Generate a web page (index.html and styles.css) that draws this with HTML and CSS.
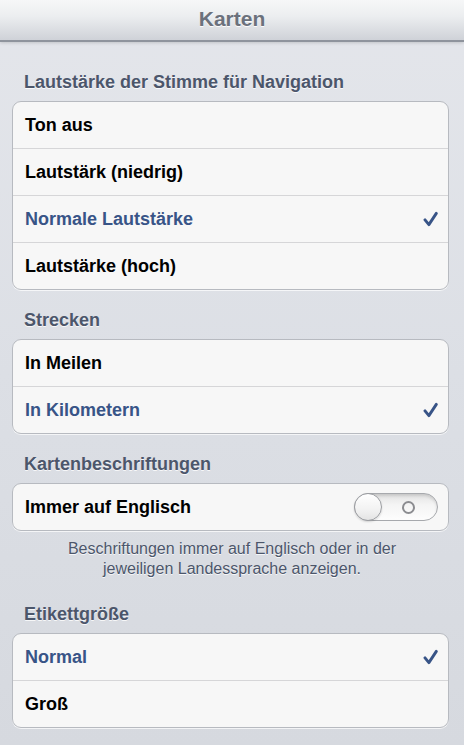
FILE: index.html
```html
<!DOCTYPE html>
<html lang="de">
<head>
<meta charset="utf-8">
<title>Karten</title>
<link rel="stylesheet" href="styles.css">
</head>
<body>
<header class="navbar"><h1 class="navbar-title">Karten</h1></header>
<main class="content">
  <section class="section">
    <h2 class="section-title">Lautstärke der Stimme für Navigation</h2>
    <ul class="group">
      <li class="row"><span class="label">Ton aus</span></li>
      <li class="row"><span class="label">Lautstärk (niedrig)</span></li>
      <li class="row selected"><span class="label">Normale Lautstärke</span>
        <svg class="check" viewBox="0 0 15 16" width="15" height="16"><path d="M2 8.8 L5.9 13.6 L13.3 2.4" fill="none" stroke="currentColor" stroke-width="2.9" stroke-linecap="round" stroke-linejoin="round"/></svg></li>
      <li class="row"><span class="label">Lautstärke (hoch)</span></li>
    </ul>
  </section>
  <section class="section">
    <h2 class="section-title">Strecken</h2>
    <ul class="group">
      <li class="row"><span class="label">In Meilen</span></li>
      <li class="row selected"><span class="label">In Kilometern</span>
        <svg class="check" viewBox="0 0 15 16" width="15" height="16"><path d="M2 8.8 L5.9 13.6 L13.3 2.4" fill="none" stroke="currentColor" stroke-width="2.9" stroke-linecap="round" stroke-linejoin="round"/></svg></li>
    </ul>
  </section>
  <section class="section">
    <h2 class="section-title">Kartenbeschriftungen</h2>
    <ul class="group">
      <li class="row"><span class="label">Immer auf Englisch</span>
        <span class="switch"><span class="switch-knob"></span><span class="switch-off"></span></span></li>
    </ul>
    <p class="footer">Beschriftungen immer auf Englisch oder in der jeweiligen Landessprache anzeigen.</p>
  </section>
  <section class="section">
    <h2 class="section-title">Etikettgröße</h2>
    <ul class="group">
      <li class="row selected"><span class="label">Normal</span>
        <svg class="check" viewBox="0 0 15 16" width="15" height="16"><path d="M2 8.8 L5.9 13.6 L13.3 2.4" fill="none" stroke="currentColor" stroke-width="2.9" stroke-linecap="round" stroke-linejoin="round"/></svg></li>
      <li class="row"><span class="label">Groß</span></li>
    </ul>
  </section>
</main>
</body>
</html>
```

FILE: styles.css
```css
html, body {
  margin: 0;
  padding: 0;
}
body {
  width: 464px;
  min-height: 745px;
  font-family: "Liberation Sans", Arial, Helvetica, sans-serif;
  background: linear-gradient(180deg, #e4e6eb 0%, #dcdfe5 50%, #d6d9df 100%);
  overflow: hidden;
}
.navbar {
  height: 40px;
  border-bottom: 2px solid #8f949d;
  background: linear-gradient(180deg, #f6f7f8 0%, #eceef0 40%, #cfd2d8 100%);
  box-shadow: 0 1px 3px rgba(0, 0, 0, 0.15);
  text-align: center;
  position: relative;
}
.navbar-title {
  margin: 0;
  font-size: 21px;
  line-height: 38px;
  font-weight: bold;
  color: #6b717c;
  text-shadow: 0 1px 0 rgba(255, 255, 255, 0.9);
}
.content {
  padding-top: 10px;
}
.section-title {
  margin: 20px 0 9px;
  padding: 0 24px;
  height: 20px;
  font-size: 18px;
  line-height: 20px;
  font-weight: bold;
  color: #4c566b;
  text-shadow: 0 1px 0 rgba(255, 255, 255, 0.8);
}
.group {
  list-style: none;
  margin: 0 15px 0 12px;
  padding: 0;
  background: #f7f7f7;
  border: 1px solid #b7bac0;
  border-radius: 9px;
  box-shadow: 0 1px 0 rgba(255, 255, 255, 0.7);
}
.row {
  height: 46px;
  display: flex;
  align-items: center;
  justify-content: space-between;
  padding: 0 10px 0 12px;
  border-top: 1px solid #d6d6d8;
}
.row:first-child {
  border-top: none;
}
.label {
  font-size: 18px;
  font-weight: bold;
  color: #000;
}
.selected .label {
  color: #385487;
}
.check {
  color: #385487;
  display: block;
}
.switch {
  position: relative;
  width: 82px;
  height: 26px;
  border-radius: 14px;
  border: 1px solid #a7a9ad;
  background: linear-gradient(180deg, #e2e2e2 0%, #f4f4f4 40%, #fdfdfd 100%);
  box-shadow: inset 0 2px 3px rgba(0, 0, 0, 0.12);
}
.switch-knob {
  position: absolute;
  left: -1px;
  top: -1px;
  width: 26px;
  height: 26px;
  border-radius: 50%;
  border: 1px solid #9b9da1;
  background: linear-gradient(180deg, #ffffff 0%, #f2f2f2 60%, #e4e4e4 100%);
  box-shadow: 0 1px 2px rgba(0, 0, 0, 0.15);
}
.switch-off {
  position: absolute;
  left: 47px;
  top: 7px;
  width: 9px;
  height: 9px;
  border-radius: 50%;
  border: 2px solid #8b8c90;
}
.footer {
  margin: 8px 50px 25px;
  font-size: 16px;
  line-height: 20px;
  text-align: center;
  color: #4c566b;
  text-shadow: 0 1px 0 rgba(255, 255, 255, 0.8);
}
.footer + .section-title {
  margin-top: 0;
}
```
